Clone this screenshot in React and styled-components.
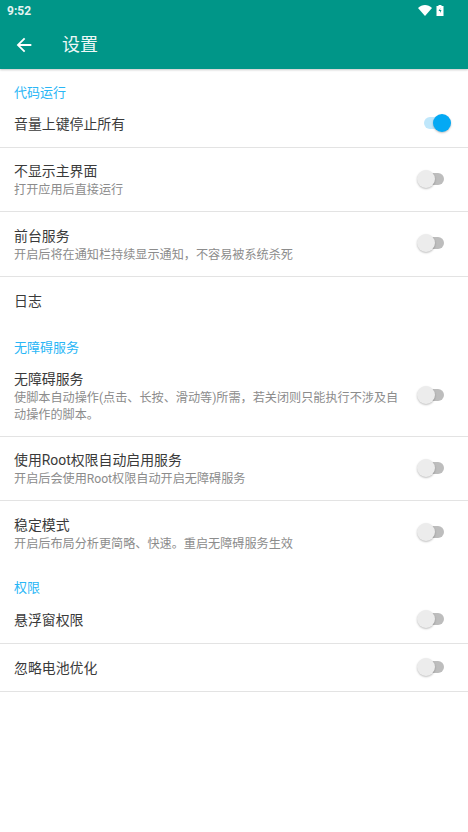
import React from 'react';
import styled, { createGlobalStyle } from 'styled-components';

const GlobalStyle = createGlobalStyle`
html, body {
  margin: 0;
  padding: 0;
  background: #fff;
  font-family: Roboto, "Noto Sans CJK SC", sans-serif;
}
`;

const Page = styled.div`
width: 468px;
height: 832px;
overflow: hidden;
background: #fff;
`;

const Header = styled.div`
background: #009688;
height: 69px;
color: #fff;
box-shadow: 0 1px 2px rgba(0, 0, 0, 0.22);
position: relative;
`;

const StatusBar = styled.div`
height: 21px;
display: flex;
align-items: center;
justify-content: space-between;
padding: 0 24px 0 7px;
font-size: 12px;
font-weight: 700;
color: #e4f3f1;
`;

const StatusIcons = styled.div`
display: flex;
align-items: center;
gap: 4px;
`;

const Toolbar = styled.div`
height: 48px;
display: flex;
align-items: center;
padding-left: 13px;
`;

const BackButton = styled.svg`
width: 22px;
height: 22px;
margin-right: 27px;
`;

const Title = styled.div`
font-size: 18px;
line-height: 48px;
color: #eef8f7;
`;

const SectionTitle = styled.div`
font-size: 13px;
line-height: 18px;
color: #29b6f6;
padding: ${(p) => p.$top}px 14px 0;
margin-bottom: -1px;
`;

const Row = styled.div`
display: flex;
align-items: center;
justify-content: space-between;
box-sizing: border-box;
height: ${(p) => p.$height}px;
padding: 0 24px 0 14px;
border-bottom: ${(p) => (p.$plain ? 'none' : '1px solid #e3e3e3')};
`;

const RowText = styled.div`
width: 388px;
padding-top: ${(p) => (p.$desc ? 1 : 0)}px;
`;

const RowTitle = styled.div`
font-size: 13.9px;
line-height: 20px;
color: #3a3a3a;
`;

const RowDesc = styled.div`
font-size: 12.13px;
line-height: 17px;
margin-top: 1px;
color: #8c8c8c;
`;

const SwitchWrap = styled.div`
position: relative;
width: 27px;
height: 20px;
flex-shrink: 0;
margin-bottom: 2px;
`;

const Track = styled.div`
position: absolute;
left: 7px;
top: 4px;
width: 20px;
height: 12px;
border-radius: 6px;
background: ${(p) => (p.$on ? '#bfe7fb' : '#bdbdbd')};
`;

const Thumb = styled.div`
position: absolute;
left: ${(p) => (p.$on ? 16 : 0)}px;
top: 1px;
width: 18px;
height: 18px;
border-radius: 50%;
background: ${(p) => (p.$on ? '#03a9f4' : '#ececec')};
box-shadow: 0 1px 2px rgba(0, 0, 0, 0.25);
`;

const Switch = ({ on }) => (
  <SwitchWrap>
    <Track $on={on} />
    <Thumb $on={on} />
  </SwitchWrap>
);

const Item = ({ title, desc, height, on, plain, noSwitch }) => (
  <Row $height={height} $plain={plain}>
    <RowText $desc={!!desc}>
      <RowTitle>{title}</RowTitle>
      {desc && <RowDesc>{desc}</RowDesc>}
    </RowText>
    {!noSwitch && <Switch on={on} />}
  </Row>
);

export default function App() {
  return (
    <Page>
      <GlobalStyle />
      <Header>
        <StatusBar>
          <span>9:52</span>
          <StatusIcons>
            <svg width="14" height="11" viewBox="0 0 14 11">
              <path d="M0 3 C4 -1 10 -1 14 3 L7 11 Z" fill="#fff" />
            </svg>
            <svg width="8" height="11" viewBox="0 0 8 11">
              <path d="M2.500 0h3v1H7.500v10H.500V1h2z" fill="#fff" />
              <path d="M4.500 3L2.500 6H4v2l1.500-3H4z" fill="#009688" />
            </svg>
          </StatusIcons>
        </StatusBar>
        <Toolbar>
          <BackButton viewBox="0 0 24 24">
            <path d="M20 11H7.830l5.590-5.590L12 4l-8 8 8 8 1.410-1.410L7.830 13H20v-2z" fill="#fff" />
          </BackButton>
          <Title>设置</Title>
        </Toolbar>
      </Header>

      <SectionTitle $top={15}>代码运行</SectionTitle>
      <Item title="音量上键停止所有" height={47} on />
      <Item title="不显示主界面" desc="打开应用后直接运行" height={64} />
      <Item title="前台服务" desc="开启后将在通知栏持续显示通知，不容易被系统杀死" height={65} />
      <Item title="日志" height={48} plain noSwitch />

      <SectionTitle $top={14}>无障碍服务</SectionTitle>
      <Item
        title="无障碍服务"
        desc="使脚本自动操作(点击、长按、滑动等)所需，若关闭则只能执行不涉及自动操作的脚本。"
        height={81}
      />
      <Item title="使用Root权限自动启用服务" desc="开启后会使用Root权限自动开启无障碍服务" height={64} />
      <Item title="稳定模式" desc="开启后布局分析更简略、快速。重启无障碍服务生效" height={64} plain />

      <SectionTitle $top={14}>权限</SectionTitle>
      <Item title="悬浮窗权限" height={48} />
      <Item title="忽略电池优化" height={48} />
    </Page>
  );
}
